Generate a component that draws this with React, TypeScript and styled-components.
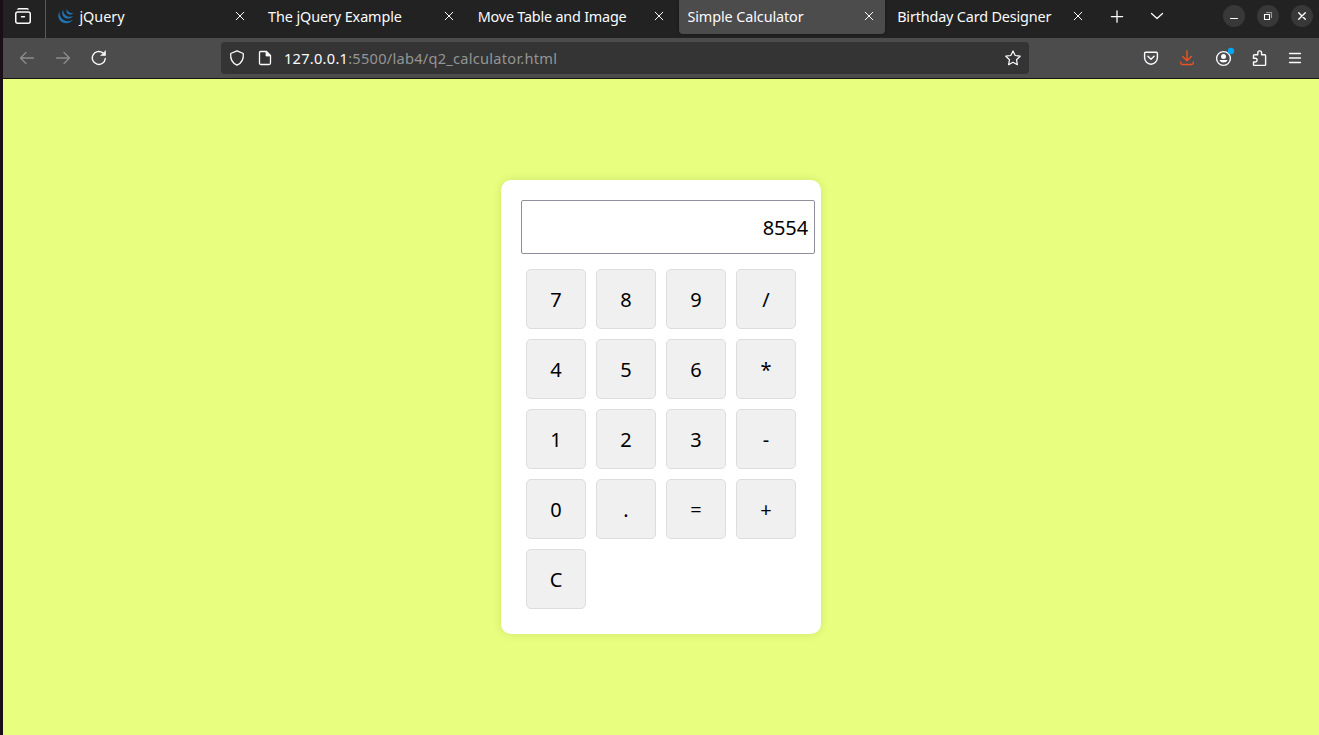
import React from 'react';
import styled, { createGlobalStyle } from 'styled-components';

const GlobalStyle = createGlobalStyle`
  html, body, #root { height: 100%; }
  body {
    margin: 0;
    overflow: hidden;
    background: #1a0f17;
    font-family: "Noto Sans", "Open Sans", sans-serif;
  }
  *, *::before, *::after { box-sizing: border-box; }
`;

const BrowserWindow = styled.div`
  display: flex;
  flex-direction: column;
  height: 100vh;
  margin-left: 3px;
  background: #222222;
`;

const TabBar = styled.header`
  display: flex;
  flex: none;
  height: 38px;
  background: #222222;
  color: #fbfbfe;
`;

const RecentButton = styled.div`
  display: flex;
  flex: none;
  width: 43px;
  height: 38px;
  padding: 8px 0 0 12px;
  border-right: 1px solid #5a5a5a;
`;

const TabList = styled.div`
  display: flex;
  gap: 3.7px;
  margin-left: 3.6px;
`;

const Tab = styled.div<{ $active?: boolean }>`
  display: flex;
  align-items: center;
  width: 206px;
  height: 34px;
  padding: 0 10px 2px 8.8px;
  border-radius: 0 0 4px 4px;
  background: ${(p) => (p.$active ? '#4c4c4c' : 'transparent')};
  box-shadow: ${(p) => (p.$active ? '0 0 3px rgba(0, 0, 0, 0.45)' : 'none')};
`;

const Favicon = styled.span`
  display: flex;
  width: 16px;
  margin-right: 5px;
`;

const TabTitle = styled.span<{ $tracking: number }>`
  flex: 1;
  padding-top: 2px;
  font-size: 14.4px;
  line-height: 20px;
  white-space: nowrap;
  letter-spacing: ${(p) => p.$tracking}px;
`;

const TabClose = styled.span`
  display: flex;
  flex: none;
`;

const StripActions = styled.div`
  display: flex;
  gap: 24px;
  padding: 8px 0 0 15px;
`;

const WindowControls = styled.div`
  display: flex;
  gap: 12px;
  margin-left: auto;
  padding: 5px 6px 0 0;
`;

const WindowButton = styled.span`
  display: flex;
  align-items: center;
  justify-content: center;
  width: 22px;
  height: 22px;
  border-radius: 50%;
  background: #383838;
`;

const Toolbar = styled.nav`
  display: flex;
  flex: none;
  align-items: center;
  height: 41px;
  background: #4c4c4c;
  border-bottom: 1px solid #161616;
  color: #fbfbfe;
`;

const NavButtons = styled.div`
  display: flex;
  gap: 20px;
  width: 218px;
  padding-left: 16px;
`;

const AddressBar = styled.div`
  display: flex;
  align-items: center;
  width: 808px;
  height: 32px;
  padding: 0 8px;
  border-radius: 4px;
  background: #343434;
`;

const PageIcon = styled.span`
  display: flex;
  margin: 0 11px 0 12px;
`;

const Url = styled.span`
  flex: 1;
  font-size: 14.6px;
  line-height: 20px;
  letter-spacing: 0.26px;
  color: #949494;
`;

const Host = styled.span`
  color: #fbfbfe;
`;

const ToolbarActions = styled.div`
  display: flex;
  align-items: center;
  gap: 20px;
  margin-left: auto;
  padding-right: 16px;
`;

const Page = styled.main`
  display: flex;
  flex: 1;
  align-items: center;
  justify-content: center;
  background: #e7fe7e;
`;

const Calculator = styled.section`
  width: 320px;
  height: 454px;
  padding: 20px;
  border-radius: 10px;
  background: #ffffff;
  box-shadow: 0 0 10px rgba(0, 0, 0, 0.1);
`;

const Display = styled.div`
  display: flex;
  align-items: center;
  justify-content: flex-end;
  width: 294px;
  height: 54px;
  padding: 0 6px 0 0;
  border: 1px solid #8f8f9d;
  border-radius: 2px;
  font-size: 20px;
  letter-spacing: -0.1px;
  color: #000000;
`;

const Keypad = styled.div`
  display: grid;
  grid-template-columns: repeat(4, 60px);
  gap: 10px;
  padding: 15px 5px 0;
`;

const Key = styled.button`
  height: 60px;
  padding: 2px 0 0;
  border: 1px solid #dddddd;
  border-radius: 5px;
  background: #f0f0f0;
  font-family: inherit;
  font-size: 20px;
  line-height: 26px;
  color: #000000;
`;

const OverflowSvg = styled.svg`
  overflow: visible;
`;

type IconProps = { children: React.ReactNode; size?: number; color?: string; width?: number };

const Icon = ({ children, size = 16, color = 'currentColor', width = 1.3 }: IconProps) => (
  <svg
    width={size}
    height={size}
    viewBox={`0 0 ${size} ${size}`}
    fill="none"
    stroke={color}
    strokeWidth={width}
    strokeLinecap="round"
    strokeLinejoin="round"
  >
    {children}
  </svg>
);

const CloseIcon = () => (
  <Icon size={12} width={1}>
    <path d="M2.2 2.2l7.6 7.6M9.8 2.2l-7.6 7.6" />
  </Icon>
);

const JQueryIcon = () => (
  <svg width="16" height="16" viewBox="0 0 16 16" fill="#1f75b5">
    <path d="M1.6 3.2C-1 7.600.6 12.200 4.200 14.200c3.600 1.900 8.300 1 10.800-2.400-2.900 1.700-6.200 1.900-8.900.5C2.700 10.600.9 7 1.600 3.200z" />
    <path d="M5.200 1.600C3.400 4.600 4 8 6.800 9.700c2.700 1.600 6.300 1 8.400-1.700-2.200 1.100-4.500 1-6.600-.1C6.200 6.600 4.900 4.200 5.200 1.600z" />
    <path d="M9 1C7.900 2.900 8.500 5 10.200 5.900c1.700 1 3.900.6 5.300-1.200-1.400.5-2.700.4-3.900-.2C10 3.700 9 2.500 9 1z" />
  </svg>
);

const tabs = [
  { title: 'jQuery', tracking: 0, icon: true },
  { title: 'The jQuery Example', tracking: -0.1 },
  { title: 'Move Table and Image', tracking: -0.21 },
  { title: 'Simple Calculator', tracking: -0.1 },
  { title: 'Birthday Card Designer', tracking: -0.16 },
];

const activeTab = 'Simple Calculator';

const keys = ['7', '8', '9', '/', '4', '5', '6', '*', '1', '2', '3', '-', '0', '.', '=', '+', 'C'];

export default function App() {
  return (
    <>
      <GlobalStyle />
      <BrowserWindow>
        <TabBar>
          <RecentButton>
            <Icon width={1.5}>
              <path d="M3 1.200Q3.300.75 4 .75h8q.7 0 1 .45" />
              <rect x=".75" y="4" width="14.500" height="11.250" rx="2" />
              <path d="M6.500 8.700h3" />
            </Icon>
          </RecentButton>
          <TabList>
            {tabs.map((tab) => (
              <Tab key={tab.title} $active={tab.title === activeTab}>
                {tab.icon && (
                  <Favicon>
                    <JQueryIcon />
                  </Favicon>
                )}
                <TabTitle $tracking={tab.tracking}>{tab.title}</TabTitle>
                <TabClose>
                  <CloseIcon />
                </TabClose>
              </Tab>
            ))}
          </TabList>
          <StripActions>
            <Icon>
              <path d="M8 3v11.200M2.400 8.600h11.200" />
            </Icon>
            <Icon>
              <path d="M2.500 5.500L8 10.500l5.500-5" />
            </Icon>
          </StripActions>
          <WindowControls>
            <WindowButton>
              <Icon width={1}>
                <path d="M4.500 10.500h7" />
              </Icon>
            </WindowButton>
            <WindowButton>
              <Icon width={1.1}>
                <path d="M4.500 6.500h5v5h-5z" strokeLinejoin="miter" />
                <path d="M6.500 4.500h5v5" stroke="#999999" />
              </Icon>
            </WindowButton>
            <WindowButton>
              <Icon width={1.4}>
                <path d="M4.700 4.700l6.600 6.600M11.300 4.700l-6.600 6.600" />
              </Icon>
            </WindowButton>
          </WindowControls>
        </TabBar>
        <Toolbar>
          <NavButtons>
            <Icon color="#8c8c8c">
              <path d="M14.500 8H1.800M7 2.500L1.500 8 7 13.500" />
            </Icon>
            <Icon color="#8c8c8c">
              <path d="M1.500 8h12.700M9 2.500L14.500 8 9 13.500" />
            </Icon>
            <Icon width={1.4}>
              <path d="M14.300 8.500A6.500 6.500 0 1 1 11.800 2.800" />
              <path d="M14.500 1v4.500H10z" fill="currentColor" strokeWidth=".6" />
            </Icon>
          </NavButtons>
          <AddressBar>
            <Icon>
              <path d="M8 .8l6.300 2.700c.4 4.600-.8 9.300-6.300 11.700C2.500 12.800 1.300 8.100 1.700 3.500z" />
            </Icon>
            <PageIcon>
              <Icon>
                <path d="M3.500 1.500h6l4 4V13q0 1.500-1.500 1.500H4Q2.500 14.500 2.500 13V2.500q0-1 1-1z" />
                <path d="M9 1.500v4.500h4.500z" fill="currentColor" strokeWidth=".8" />
              </Icon>
            </PageIcon>
            <Url>
              <Host>127.0.0.1</Host>:5500/lab4/q2_calculator.html
            </Url>
            <Icon width={1.2}>
              <path d="M8 .9l2.200 4.600 5 .7-3.700 3.500.9 5L8 12.300l-4.400 2.400.9-5L.8 6.200l5-.7z" />
            </Icon>
          </AddressBar>
          <ToolbarActions>
            <Icon width={1.4}>
              <path d="M2.700 2.300h10.600q1.100 0 1.100 1.100V7.800a6.400 6.400 0 0 1-12.800 0V3.400Q1.600 2.300 2.700 2.300z" />
              <path d="M4.900 6.200L8 9.200l3.100-3" />
            </Icon>
            <Icon color="#ea5423" width={1.4}>
              <path d="M8 .8v9.700M3.700 6.500L8 10.800l4.300-4.300M1.700 12v.8q0 1.700 1.700 1.700h9.200q1.700 0 1.700-1.700V12" />
            </Icon>
            <OverflowSvg width="16" height="16" viewBox="0 0 16 16" fill="none">
              <circle cx="8.500" cy="8.500" r="6.900" stroke="currentColor" strokeWidth="1.400" />
              <circle cx="8.500" cy="6.400" r="2.500" fill="currentColor" />
              <path d="M4.400 10h8.200a4.300 3.700 0 0 1-8.200 0z" fill="currentColor" />
              <circle cx="16" cy="1" r="3.200" fill="#00a6f2" />
            </OverflowSvg>
            <Icon width={1.4}>
              <path d="M6.800 4.700V2.800a1.900 1.900 0 0 1 3.800 0v1.900H13.600q1 0 1 1v8.700q0 1-1 1H3.500q-1 0-1-1V12h1.700a1.900 1.900 0 0 0 0-3.800H2.500V5.700q0-1 1-1z" />
            </Icon>
            <Icon>
              <path d="M2.500 3.500h11M2.500 8h11M2.500 12.500h11" />
            </Icon>
          </ToolbarActions>
        </Toolbar>
        <Page>
          <Calculator>
            <Display>8554</Display>
            <Keypad>
              {keys.map((key) => (
                <Key key={key}>{key}</Key>
              ))}
            </Keypad>
          </Calculator>
        </Page>
      </BrowserWindow>
    </>
  );
}
